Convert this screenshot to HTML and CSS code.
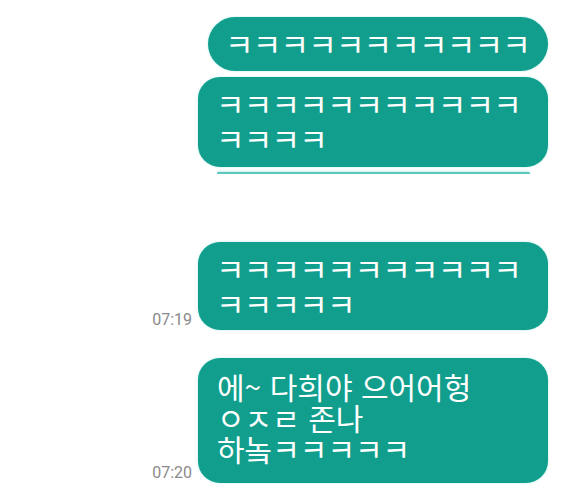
FILE: index.html
```html
<!DOCTYPE html>
<html lang="ko">
<head>
<meta charset="utf-8">
<link rel="stylesheet" href="styles.css">
</head>
<body>
<div class="chat">
  <div class="row row-first">
    <div class="bubble pill">ㅋㅋㅋㅋㅋㅋㅋㅋㅋㅋㅋ</div>
  </div>
  <div class="row row-second">
    <div class="bubble wide">ㅋㅋㅋㅋㅋㅋㅋㅋㅋㅋㅋ<br>ㅋㅋㅋㅋ</div>
  </div>
  <div class="row cut-row">
    <div class="cut-edge"></div>
  </div>
  <div class="row row-third">
    <span class="time">07:19</span>
    <div class="bubble wide">ㅋㅋㅋㅋㅋㅋㅋㅋㅋㅋㅋ<br>ㅋㅋㅋㅋㅋ</div>
  </div>
  <div class="row row-fourth">
    <span class="time">07:20</span>
    <div class="bubble wide talk">에~ 다희야 으어어헝<br>ㅇㅈㄹ 존나<br>하놐ㅋㅋㅋㅋㅋ</div>
  </div>
</div>
</body>
</html>
```

FILE: styles.css
```css
html, body {
  margin: 0;
  padding: 0;
  background: #ffffff;
}

body {
  width: 579px;
  height: 489px;
  overflow: hidden;
  font-family: "Noto Sans CJK KR", "Noto Sans", sans-serif;
}

.chat {
  display: flex;
  flex-direction: column;
  padding-right: 31px;
}

.row {
  display: flex;
  justify-content: flex-end;
  align-items: flex-end;
}

.row-first {
  margin-top: 17px;
}

.row-second {
  margin-top: 6px;
}

.cut-row {
  margin-top: 5px;
  padding-right: 18px;
}

.cut-edge {
  width: 313px;
  height: 2px;
  background: #5fc6ba;
  border-radius: 1px;
  box-shadow: 0 -1px 2px rgba(150, 230, 225, 0.6);
}

.row-third {
  margin-top: 68px;
}

.row-fourth {
  margin-top: 28px;
}

.bubble {
  box-sizing: border-box;
  background: #119e8d;
  color: #ffffff;
  font-size: 31px;
  letter-spacing: -0.8px;
  line-height: 34.5px;
  white-space: nowrap;
  box-shadow: 0 0 2px rgba(120, 225, 215, 0.7);
}

.pill {
  width: 340px;
  height: 54px;
  border-radius: 27px;
  padding: 9px 0 0 17px;
}

.wide {
  width: 350px;
  border-radius: 22px;
  padding: 9px 0 0 18px;
}

.row-second .wide {
  height: 90px;
}

.row-third .wide {
  height: 88px;
}

.talk {
  height: 125px;
  font-size: 30px;
  letter-spacing: 0;
  line-height: 31px;
  padding: 13px 0 0 19px;
}

.time {
  font-family: Roboto, "Noto Sans", sans-serif;
  font-size: 16px;
  color: #8a8a8a;
  margin-right: 6px;
  margin-bottom: 1px;
}
```
